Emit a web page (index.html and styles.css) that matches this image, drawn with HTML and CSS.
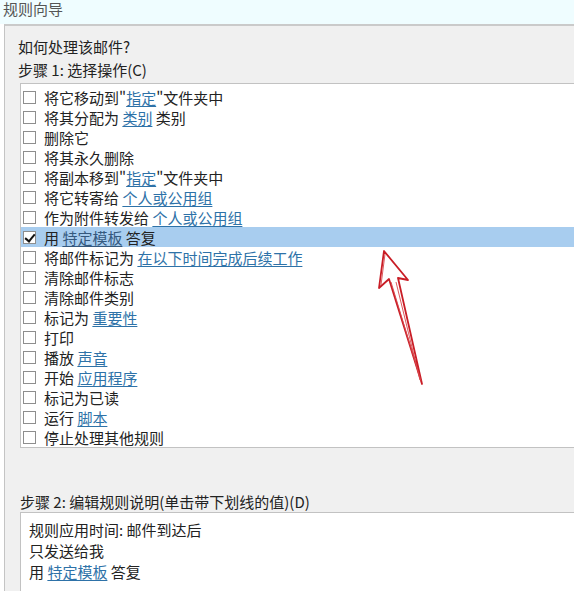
FILE: index.html
```html
<!DOCTYPE html>
<html lang="zh-CN">
<head>
    <meta charset="UTF-8">
    <meta name="viewport" content="width=device-width, initial-scale=1.0">
    <title>规则向导</title>
    <link rel="stylesheet" href="styles.css">
</head>
<body>

<div class="titlebar">
    <div class="title">规则向导</div>
</div>

<div class="dialog">
    <div class="label">如何处理该邮件?</div>
    <div class="label">步骤 1: 选择操作(C)</div>

    <div class="listbox">
        <div class="row"><span class="box"></span><span>将它移动到"<a class="link">指定</a>"文件夹中</span></div>
        <div class="row"><span class="box"></span><span>将其分配为 <a class="link">类别</a> 类别</span></div>
        <div class="row"><span class="box"></span><span>删除它</span></div>
        <div class="row"><span class="box"></span><span>将其永久删除</span></div>
        <div class="row"><span class="box"></span><span>将副本移到"<a class="link">指定</a>"文件夹中</span></div>
        <div class="row"><span class="box"></span><span>将它转寄给 <a class="link">个人或公用组</a></span></div>
        <div class="row"><span class="box"></span><span>作为附件转发给 <a class="link">个人或公用组</a></span></div>
        <div class="row selected"><span class="box checked"></span><span>用 <a class="link">特定模板</a> 答复</span></div>
        <div class="row"><span class="box"></span><span>将邮件标记为 <a class="link">在以下时间完成后续工作</a></span></div>
        <div class="row"><span class="box"></span><span>清除邮件标志</span></div>
        <div class="row"><span class="box"></span><span>清除邮件类别</span></div>
        <div class="row"><span class="box"></span><span>标记为 <a class="link">重要性</a></span></div>
        <div class="row"><span class="box"></span><span>打印</span></div>
        <div class="row"><span class="box"></span><span>播放 <a class="link">声音</a></span></div>
        <div class="row"><span class="box"></span><span>开始 <a class="link">应用程序</a></span></div>
        <div class="row"><span class="box"></span><span>标记为已读</span></div>
        <div class="row"><span class="box"></span><span>运行 <a class="link">脚本</a></span></div>
        <div class="row"><span class="box"></span><span>停止处理其他规则</span></div>
    </div>

    <div class="label step2">步骤 2: 编辑规则说明(单击带下划线的值)(D)</div>

    <div class="desc">
        <div class="line">规则应用时间: 邮件到达后</div>
        <div class="line">只发送给我</div>
        <div class="line">用 <a class="link">特定模板</a> 答复</div>
    </div>
</div>

<svg class="arrow" width="574" height="591" viewBox="0 0 574 591">
    <path d="M384 251 L379 288 L389 279 L422 384 L398 278 L408 280 Z" fill="none" stroke="#c91d26" stroke-width="1.8" stroke-linejoin="round"/>
    <path d="M385 254 L381 285 M391 282 L421 381 M396 282 L420 380" fill="none" stroke="#d8454b" stroke-width="0.9"/>
</svg>

</body>
</html>
```

FILE: styles.css
```css
body {
    margin: 0;
    height: 100vh;
    display: flex;
    flex-direction: column;
    font-family: "Noto Sans CJK SC", "Noto Sans", sans-serif;
    font-size: 15px;
    color: #222;
    background-color: #fff;
    overflow: hidden;
}
.titlebar {
    height: 24px;
    flex-shrink: 0;
    background-color: #effdff;
    padding-left: 3px;
}
.title {
    line-height: 18px;
    color: #555;
}
.dialog {
    flex: 1;
    display: flex;
    flex-direction: column;
    min-height: 0;
    margin-left: 4px;
    border-top: 2px solid #cacaca;
    border-left: 1px solid #c4c4c4;
    background-color: #f0f0f0;
    padding: 11px 0 0 13px;
}
.label {
    line-height: 20px;
    margin-bottom: 3px;
}
.listbox {
    margin-left: 2px;
    border: 1px solid #c2c2c2;
    border-right: none;
    background-color: #fff;
    padding-top: 3px;
}
.row {
    display: flex;
    align-items: center;
    height: 20px;
    white-space: nowrap;
}
.row.selected {
    background-color: #a8cdef;
}
.box {
    width: 11px;
    height: 11px;
    border: 1px solid #8e8e8e;
    background-color: #fff;
    margin: 0 8px 0 2px;
    flex-shrink: 0;
    position: relative;
}
.box.checked::after {
    content: "";
    position: absolute;
    left: 3px;
    top: 0;
    width: 4px;
    height: 8px;
    border: solid #111;
    border-width: 0 2px 2px 0;
    transform: rotate(40deg);
}
.link {
    color: #2e72a8;
    text-decoration: underline;
    text-underline-offset: 2px;
}
.selected .link {
    color: #35597e;
}
.step2 {
    margin: 44px 0 0 2px;
}
.desc {
    flex: 1;
    margin-left: 2px;
    border: 1px solid #c2c2c2;
    border-right: none;
    border-bottom: none;
    background-color: #fff;
    padding: 6px 0 0 8px;
}
.line {
    line-height: 21px;
}
.arrow {
    position: absolute;
    left: 0;
    top: 0;
    pointer-events: none;
}
```
